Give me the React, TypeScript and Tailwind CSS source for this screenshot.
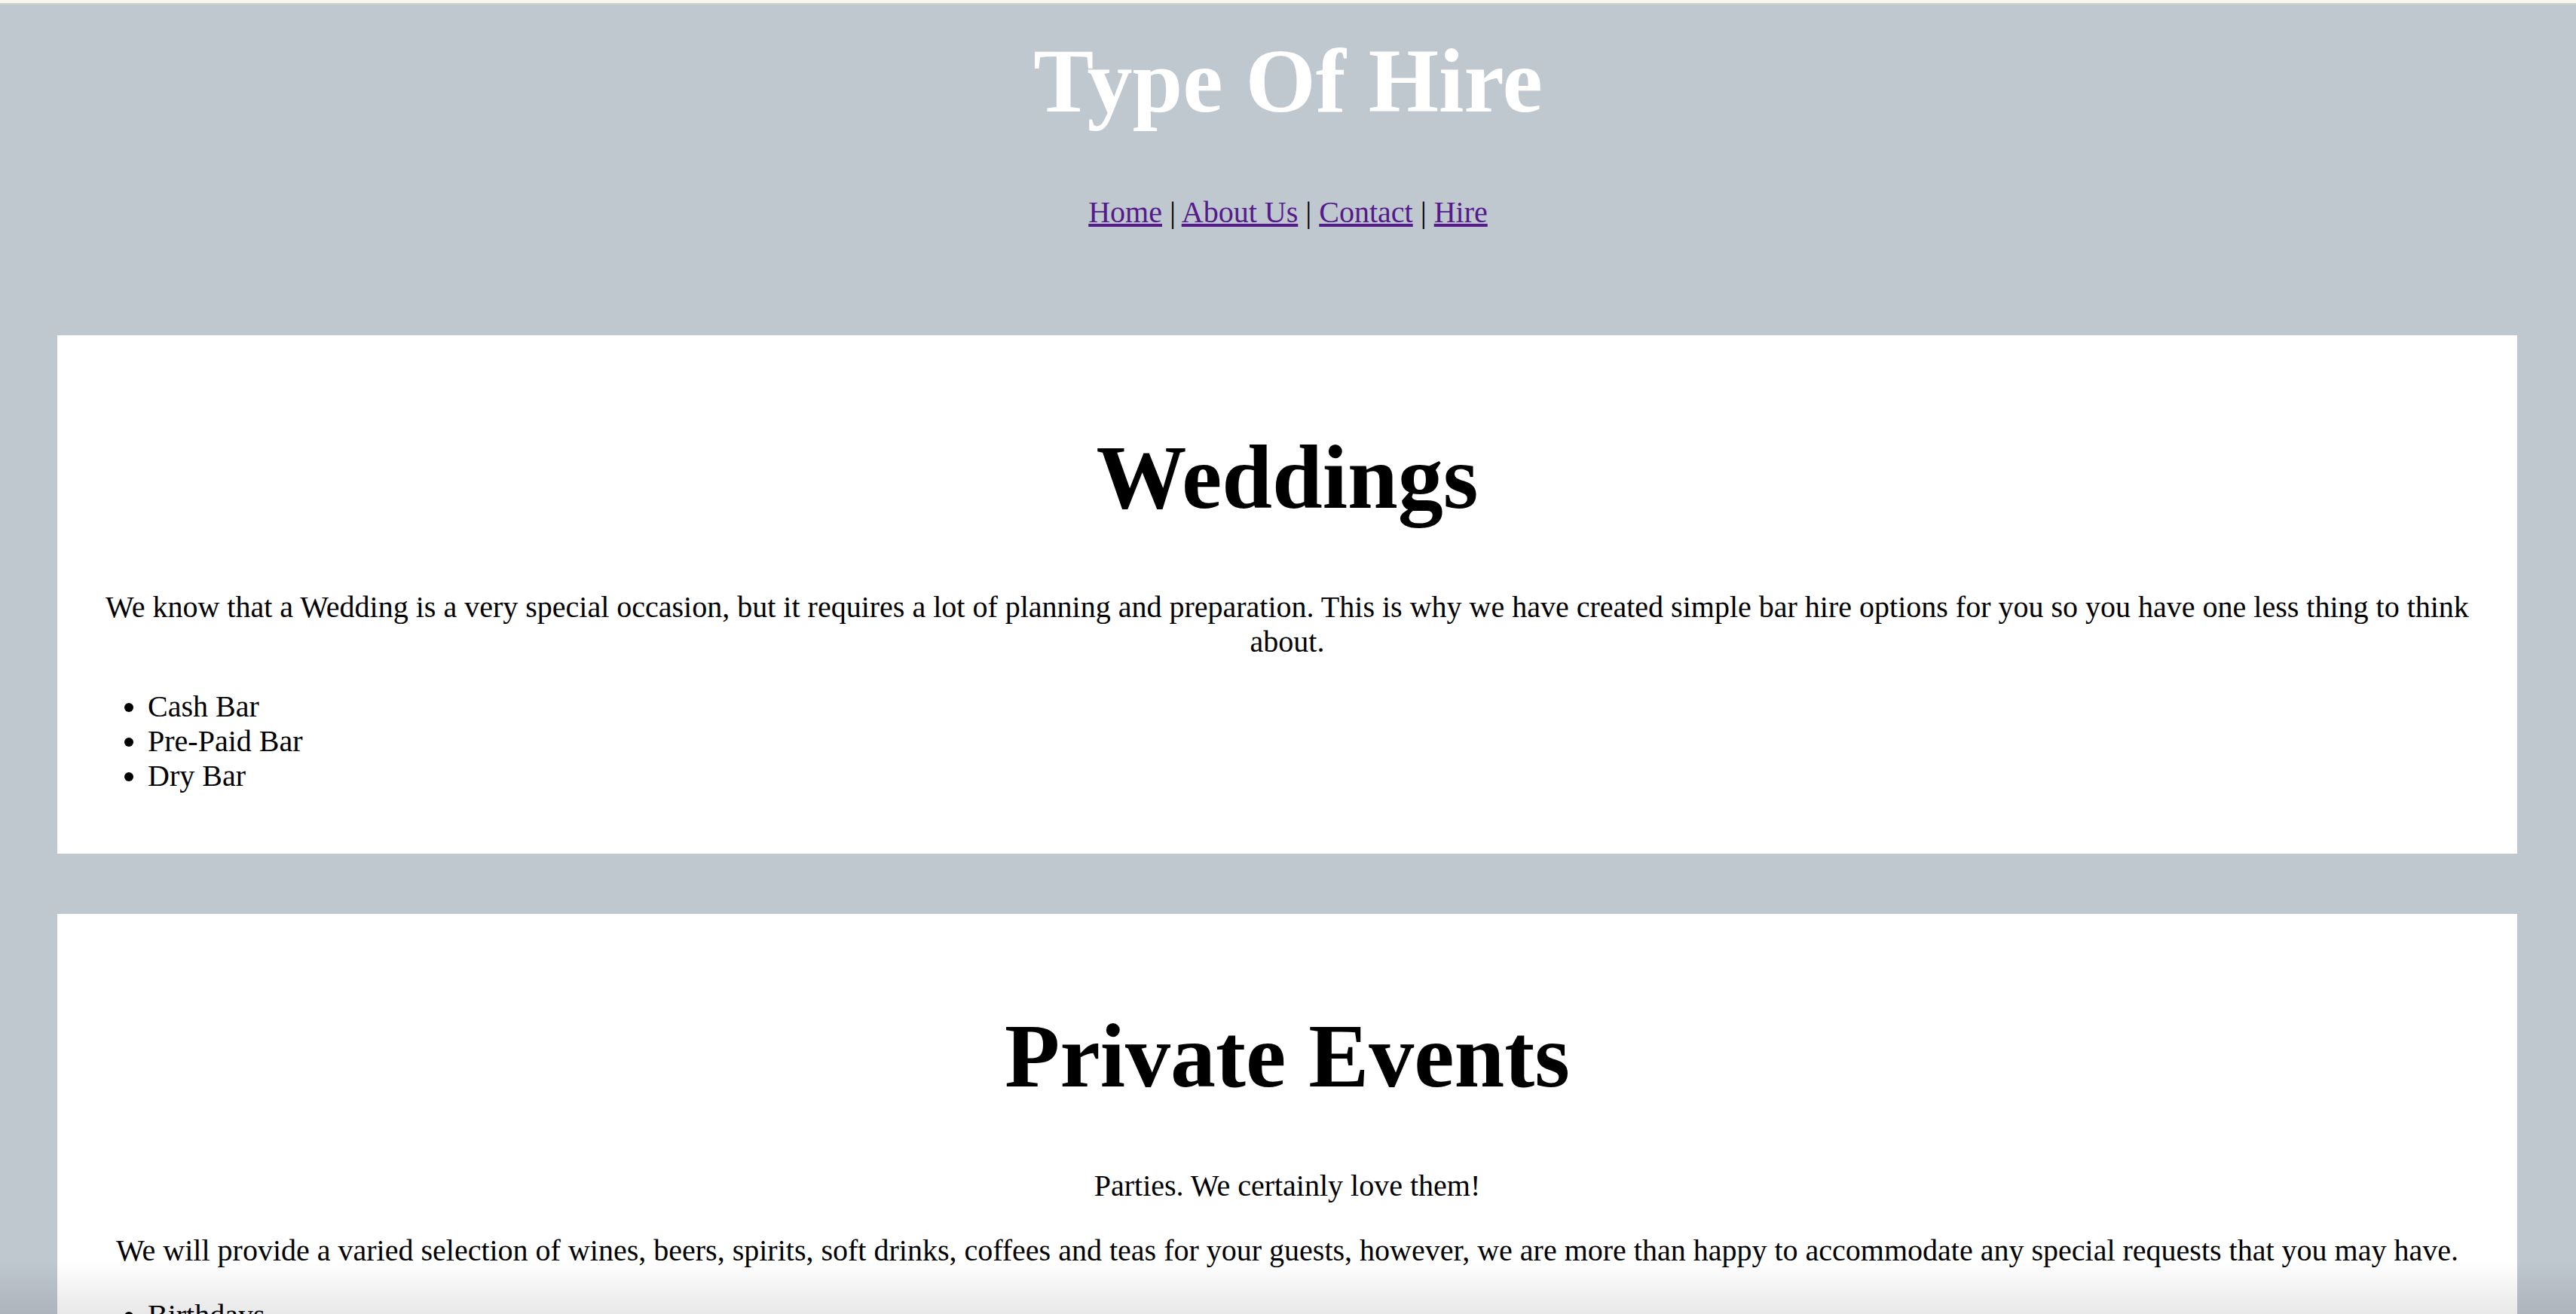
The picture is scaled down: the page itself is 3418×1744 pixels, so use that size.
import React, { FC } from "react";

const serif = "font-['Liberation_Serif','Times_New_Roman',serif]";

interface HireCardProps {
  title: string;
  paragraphs: string[];
  items: string[];
  className?: string;
}

const HireCard: FC<HireCardProps> = ({ title, paragraphs, items, className }) => {
  return (
    <section className={`bg-white px-[20px] pt-[40px] pb-[80px] text-black ${className ?? ""}`}>
      <h2 className="mt-[80px] text-center text-[120px] font-bold leading-[138px]">{title}</h2>
      {paragraphs.map((text, i) => (
        <p
          key={i}
          className={`text-center text-[40px] leading-[46px] ${i === 0 ? "mt-[80px]" : "mt-[40px]"}`}
        >
          {text}
        </p>
      ))}
      <ul className="mt-[40px] list-disc pl-[100px] text-[40px] leading-[46px]">
        {items.map((item) => (
          <li key={item}>{item}</li>
        ))}
      </ul>
    </section>
  );
};

const App: FC = () => {
  return (
    <div className={`min-h-screen bg-[#bfc7cf] ${serif}`}>
      <div className="h-[4px] bg-[#f8f8f0]" />
      <div className="h-[2px] bg-[#cfd3cc]" />

      <header className="pt-[33px] text-center">
        <h1 className="text-[120px] font-bold leading-[138px] text-white">Type Of Hire</h1>
        <p className="mt-[82px] text-[40px] leading-[46px] text-black">
          <a href="#" className="text-[#551a8b] underline">Home</a> |{" "}
          <a href="#" className="text-[#551a8b] underline">About Us</a> |{" "}
          <a href="#" className="text-[#551a8b] underline">Contact</a> |{" "}
          <a href="#" className="text-[#551a8b] underline">Hire</a>
        </p>
      </header>

      <main className="mt-[140px] ml-[76px] mr-[78px] pb-[80px]">
        <HireCard
          title="Weddings"
          paragraphs={[
            "We know that a Wedding is a very special occasion, but it requires a lot of planning and preparation. This is why we have created simple bar hire options for you so you have one less thing to think about.",
          ]}
          items={["Cash Bar", "Pre-Paid Bar", "Dry Bar"]}
        />
        <HireCard
          className="mt-[80px]"
          title="Private Events"
          paragraphs={[
            "Parties. We certainly love them!",
            "We will provide a varied selection of wines, beers, spirits, soft drinks, coffees and teas for your guests, however, we are more than happy to accommodate any special requests that you may have.",
          ]}
          items={["Birthdays", "Anniversaries", "Corporate Events"]}
        />
      </main>

      {/* soft fade at the bottom edge of the window */}
      <div className="pointer-events-none fixed inset-x-0 bottom-0 h-[70px] bg-linear-to-b from-transparent to-black/[0.09]" />
    </div>
  );
};

export default App;
